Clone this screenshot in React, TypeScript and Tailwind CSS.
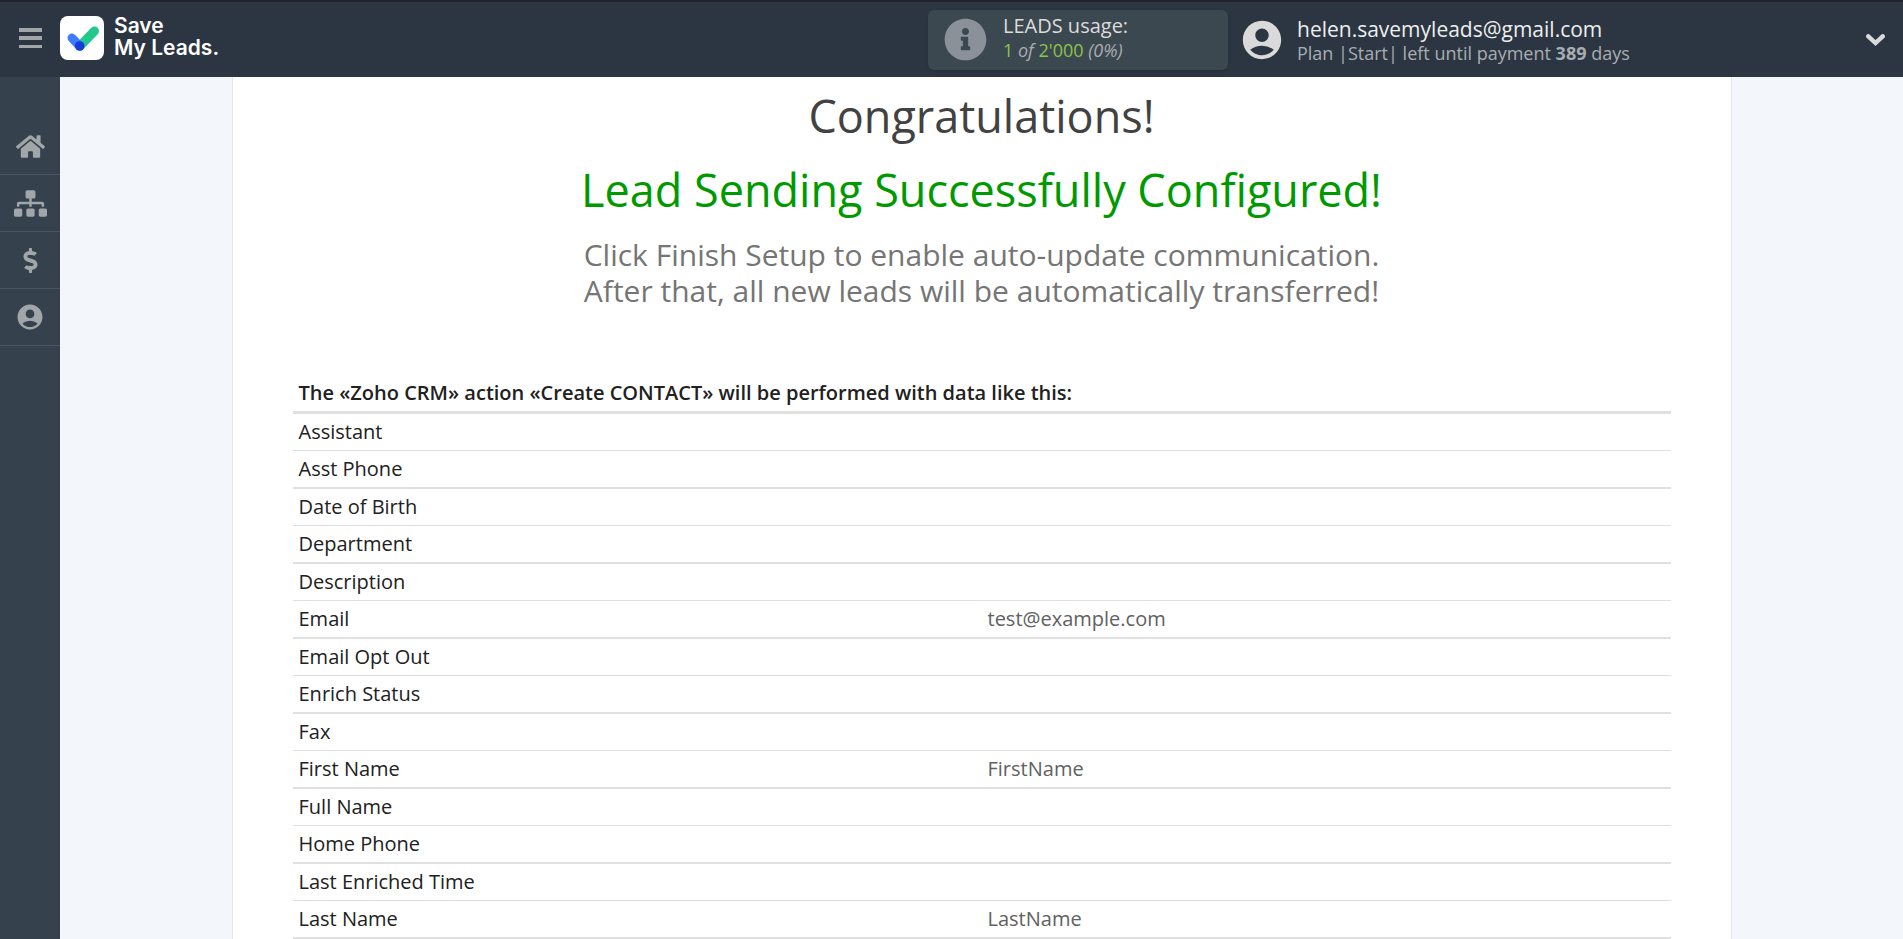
import { FaDollarSign, FaHome, FaInfoCircle, FaSitemap } from "react-icons/fa";
import { MdAccountCircle } from "react-icons/md";

const navItems = [
  { label: "Home", icon: <FaHome size={29} /> },
  { label: "Connections", icon: <FaSitemap size={33} /> },
  { label: "Billing", icon: <FaDollarSign size={25} /> },
  { label: "Profile", icon: <MdAccountCircle size={30} /> },
];

const fields = [
  { name: "Assistant", value: "" },
  { name: "Asst Phone", value: "" },
  { name: "Date of Birth", value: "" },
  { name: "Department", value: "" },
  { name: "Description", value: "" },
  { name: "Email", value: "test@example.com" },
  { name: "Email Opt Out", value: "" },
  { name: "Enrich Status", value: "" },
  { name: "Fax", value: "" },
  { name: "First Name", value: "FirstName" },
  { name: "Full Name", value: "" },
  { name: "Home Phone", value: "" },
  { name: "Last Enriched Time", value: "" },
  { name: "Last Name", value: "LastName" },
];

const Logo = () => (
  <a href="#" className="flex items-center gap-[10px] text-white">
    <svg className="h-11 w-11" viewBox="0 0 44 44">
      <rect width="44" height="44" rx="8" fill="#fff" />
      <path d="M20 30L34.5 15" stroke="#24c78e" strokeWidth="9" strokeLinecap="round" />
      <path d="M12 22L19.5 30" stroke="#3f7bff" strokeWidth="9" strokeLinecap="round" />
      <circle cx="19.7" cy="30" r="4.8" fill="#1a3bdc" />
    </svg>
    <span className="pb-[2px] font-['Inter',sans-serif] text-[21px] leading-[22px] font-semibold">
      Save
      <br />
      My Leads.
    </span>
  </a>
);

const Header = () => (
  <header className="flex h-[77px] shrink-0 items-center border-t-2 border-[#23212c] bg-[#2b3642]">
    <div className="flex h-full items-center pb-[3px]">
      <button aria-label="Toggle menu" className="flex h-full w-[60px] items-center justify-center">
        <svg className="h-5 w-[23px]" viewBox="0 0 23 20" fill="#a1a6a9">
          <rect width="23" height="4" />
          <rect y="8" width="23" height="4" />
          <rect y="17" width="23" height="3" />
        </svg>
      </button>
      <Logo />
    </div>

    <div className="ml-auto flex h-[60px] w-[300px] items-center gap-4 rounded-md bg-[#3c4850] pl-4 shadow">
      <FaInfoCircle size={43} className="text-[#8a9198]" />
      <div className="pb-[3px]">
        <div className="text-[20px] leading-6 text-[#dcdcdc]">LEADS usage:</div>
        <div className="text-[18px] leading-6 text-[#a9adb0]">
          <span className="text-[#8bc34a]">1</span> <i>of</i>
          <span className="text-[#8bc34a]"> 2'000</span> <i>(0%)</i>
        </div>
      </div>
    </div>

    <button className="flex w-[675px] items-center gap-3 pr-[18px] pl-[11px] text-left">
      <MdAccountCircle size={46} className="text-[#dadada]" />
      <div className="grow pt-[2px]">
        <div className="text-[21px] leading-6 text-[#eeeeee]">helen.savemyleads@gmail.com</div>
        <div className="text-[18px] leading-6 text-[#a9adb0]">
          Plan |Start| left until payment <b>389</b> days
        </div>
      </div>
      <svg className="h-3 w-[19px]" viewBox="0 0 19 12" fill="none">
        <path
          d="M2.3 2.3L9.5 9L16.7 2.3"
          stroke="#dadada"
          strokeWidth="4.4"
          strokeLinecap="round"
        />
      </svg>
    </button>
  </header>
);

const Sidebar = () => (
  <nav className="w-[60px] shrink-0 bg-[#36414e] pt-[41px] text-[#a1a6a9]">
    {navItems.map((item) => (
      <a
        key={item.label}
        href="#"
        aria-label={item.label}
        className="flex h-[57px] items-center justify-center border-b border-[#4a5562]"
      >
        {item.icon}
      </a>
    ))}
  </nav>
);

const FieldsTable = () => (
  <table className="mt-[66px] w-full table-fixed border-separate border-spacing-0 text-left text-[20px] leading-6">
    <thead>
      <tr>
        <th
          colSpan={2}
          className="h-[39px] border-b-3 border-[#e0e0e0] px-[6px] font-semibold text-[#212121]"
        >
          The «Zoho CRM» action «Create CONTACT» will be performed with data like this:
        </th>
      </tr>
    </thead>
    <tbody>
      {fields.map((field) => (
        <tr key={field.name} className="group">
          <td className="h-[37px] border-b border-[#e0e0e0] px-[6px] text-[#212121] group-even:h-[38px] group-even:border-b-2">
            {field.name}
          </td>
          <td className="border-b border-[#e0e0e0] px-[6px] text-[#616161] group-even:border-b-2">
            {field.value}
          </td>
        </tr>
      ))}
    </tbody>
  </table>
);

export default function App() {
  return (
    <div className="flex min-h-screen flex-col bg-[#f3f7fc] font-['Open_Sans',sans-serif]">
      <Header />
      <div className="flex grow">
        <Sidebar />
        <main className="flex grow justify-center">
          <div className="w-full max-w-[1500px] border-x border-[#e4e6e9] bg-white px-[60px] pt-[2px]">
            <div className="text-center">
              <h1 className="text-[45px] leading-[74px] text-[#424242]">Congratulations!</h1>
              <h2 className="text-[45px] leading-[74px] text-[#009a00]">
                Lead Sending Successfully Configured!
              </h2>
              <p className="mt-[10px] text-[30px] leading-9 text-[#757575]">
                Click Finish Setup to enable auto-update communication.
                <br />
                After that, all new leads will be automatically transferred!
              </p>
            </div>
            <FieldsTable />
          </div>
        </main>
      </div>
    </div>
  );
}
